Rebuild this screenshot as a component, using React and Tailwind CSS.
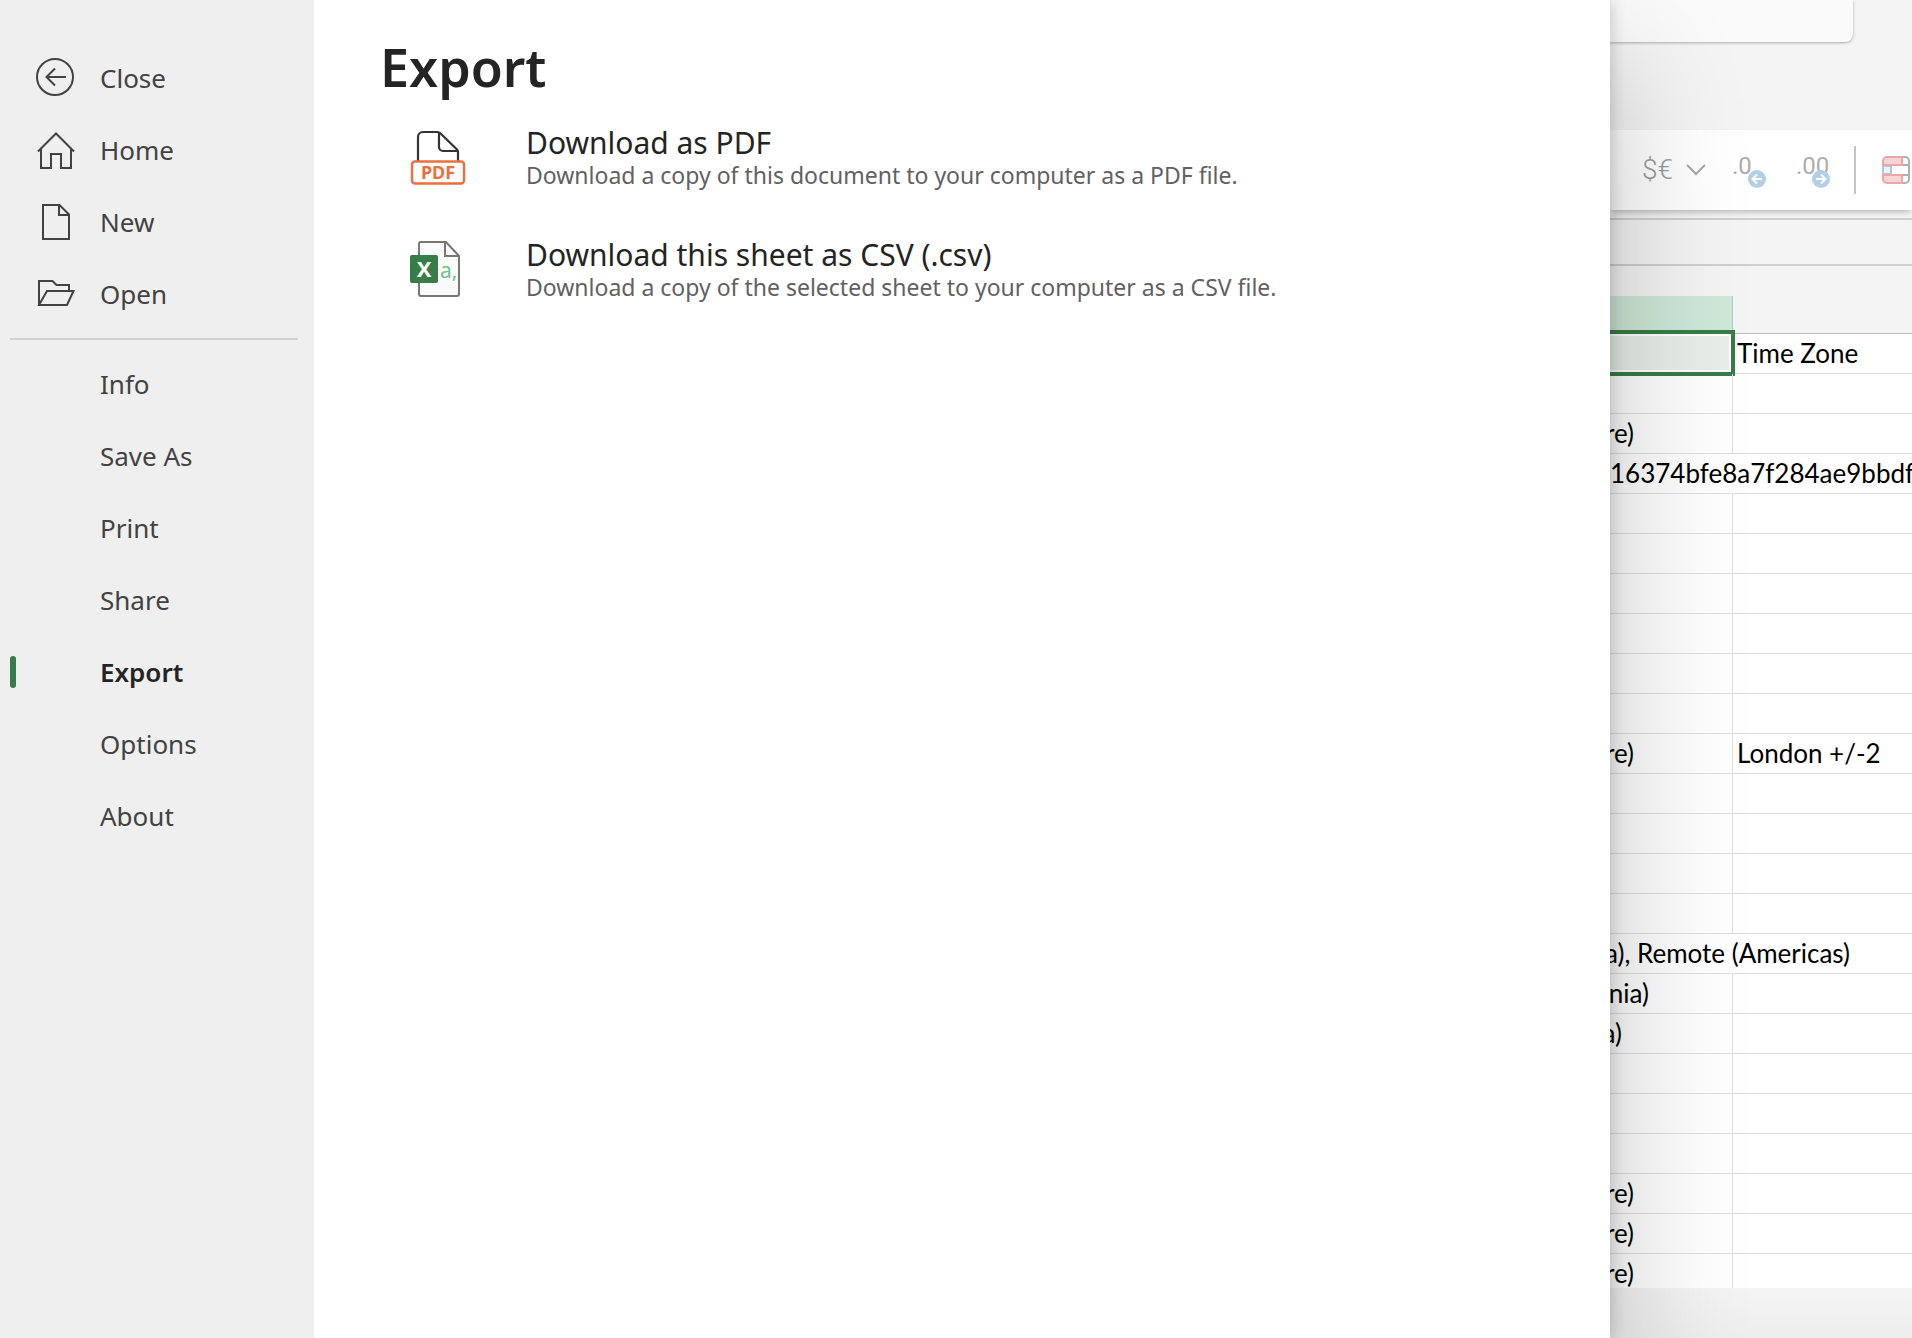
import React from "react";

const line = { fill: "none", stroke: "#424242", strokeWidth: 2 };

function CloseIcon() {
  return (
    <svg width="40" height="40" viewBox="0 0 40 40" {...line} aria-hidden="true">
      <circle cx="19" cy="19" r="18" />
      <path d="M30 19H11M19 10.500 10.500 19l8.500 8.500" />
    </svg>
  );
}

function HomeIcon() {
  return (
    <svg width="40" height="40" viewBox="0 0 40 40" {...line} aria-hidden="true">
      <path d="M2 21.500 20 3.500 38 21.500" />
      <path d="M5 18.500V38h10V24h10v14h10V18.500" />
    </svg>
  );
}

function NewIcon() {
  return (
    <svg width="40" height="40" viewBox="0 0 40 40" {...line} aria-hidden="true">
      <path d="M7 3h16.500L33 12.500V37H7Z" />
      <path d="M23 3v10h10" />
    </svg>
  );
}

function OpenIcon() {
  return (
    <svg width="40" height="40" viewBox="0 0 40 40" {...line} aria-hidden="true">
      <path d="M3 31V7h13.500l4 4H33v6" />
      <path d="M3 31 11 17h26.500L31 31Z" />
    </svg>
  );
}

function PdfIcon() {
  return (
    <svg width="64" height="64" viewBox="0 0 64 64" fill="none" aria-hidden="true">
      <path d="M12 37V13a5 5 0 0 1 5-5h14.500a4 4 0 0 1 2.800 1.200L51 25.500a4 4 0 0 1 1 2.500v9" stroke="#333" strokeWidth="2.200" />
      <path d="M33 8.500V23a4 4 0 0 0 4 4h14.500" stroke="#333" strokeWidth="2.200" />
      <rect x="6" y="37.500" width="52" height="22" rx="3" fill="#fff" stroke="#ec6f3e" strokeWidth="2.400" />
      <text x="32" y="55" textAnchor="middle" fontFamily="Noto Sans, sans-serif" fontSize="18" fontWeight="700" fill="#ec6f3e">PDF</text>
    </svg>
  );
}

function CsvIcon() {
  return (
    <svg width="64" height="64" viewBox="0 0 64 64" fill="none" aria-hidden="true">
      <path d="M14 6h26l13 14v38a2 2 0 0 1-2 2H15a2 2 0 0 1-2-2V8a2 2 0 0 1 1-2Z" fill="#fafafa" stroke="#797774" strokeWidth="2" />
      <path d="M39 6v14h14" stroke="#797774" strokeWidth="2" />
      <rect x="4" y="19" width="28" height="28" rx="2" fill="#377d47" />
      <text x="18" y="41" textAnchor="middle" fontFamily="Noto Sans, sans-serif" fontSize="22" fontWeight="700" fill="#fff">X</text>
      <text x="34" y="42" fontFamily="Noto Sans, sans-serif" fontSize="21" fill="#6cc48d">a,</text>
    </svg>
  );
}

function DecimalIcon({ digits, direction }) {
  return (
    <svg width="36" height="36" viewBox="0 0 36 36" fill="none" aria-hidden="true">
      <text x="0" y="22" fontFamily="Roboto, sans-serif" fontSize="24" fontWeight="400" fill="#adadad">{digits}</text>
      <circle cx="25" cy="27" r="9" fill="#b3cfe8" />
      <path
        d={direction === "left" ? "M30 27H20.500M25 22.500 20.500 27l4.500 4.500" : "M20 27h9.500M25 22.500l4.500 4.500-4.500 4.500"}
        stroke="#fff"
        strokeWidth="2"
      />
    </svg>
  );
}

function TableIcon() {
  return (
    <svg width="28" height="28" viewBox="0 0 28 28" fill="none" aria-hidden="true">
      <path d="M19 1h4a4 4 0 0 1 4 4v18a4 4 0 0 1-4 4h-4M20 9h7M20 19h7" stroke="#b0b0b0" strokeWidth="2" />
      <rect x="1" y="10" width="8" height="8" fill="#eef4fc" stroke="#b3c6e0" strokeWidth="2" />
      <path d="M20 1H5a4 4 0 0 0-4 4v4h19ZM20 27H5a4 4 0 0 1-4-4v-4h19Z" fill="#f8d3d5" stroke="#e8a9a6" strokeWidth="2" />
    </svg>
  );
}

const topItems = [
  ["Close", CloseIcon],
  ["Home", HomeIcon],
  ["New", NewIcon],
  ["Open", OpenIcon],
];

const bottomItems = ["Info", "Save As", "Print", "Share", "Export", "Options", "About"];

const exportOptions = [
  {
    title: "Download as PDF",
    text: "Download a copy of this document to your computer as a PDF file.",
    Icon: PdfIcon,
  },
  {
    title: "Download this sheet as CSV (.csv)",
    text: "Download a copy of the selected sheet to your computer as a CSV file.",
    Icon: CsvIcon,
  },
];

// Cell text that runs in from under the panel ends at the width of its slot.
const rows = Array.from({ length: 24 }, () => ({}));
rows[0] = { next: "Time Zone" };
rows[2] = { text: "re)", slot: "w-6" };
rows[3] = { text: "16374bfe8a7f284ae9bbdf", start: true, open: true };
rows[10] = { text: "re)", slot: "w-6", next: "London +/-2" };
rows[15] = { text: "a), Remote (Americas)", slot: "w-60", open: true };
rows[16] = { text: "nia)", slot: "w-[39px]" };
rows[17] = { text: "a)", slot: "w-3" };
rows[21] = { text: "re)", slot: "w-6" };
rows[22] = { text: "re)", slot: "w-6" };
rows[23] = { text: "re)", slot: "w-6" };

function Sidebar() {
  return (
    <nav className="w-[314px] shrink-0 bg-[#efefef] pt-[42px] text-[26px] text-[#424242]">
      {topItems.map(([label, Icon]) => (
        <button key={label} type="button" className="flex h-[72px] w-full items-center gap-6 pl-9 text-left">
          <Icon />
          <span>{label}</span>
        </button>
      ))}
      <hr className="mt-2 mr-4 mb-2 ml-[10px] border-t-2 border-[#d1d1d1]" />
      {bottomItems.map((label) => (
        <button key={label} type="button" className="flex h-[72px] w-full items-center pl-[10px] text-left">
          <span className={label === "Export" ? "h-8 w-[6px] rounded-full bg-[#377d47]" : "h-8 w-[6px]"} />
          <span className={label === "Export" ? "ml-[84px] font-semibold text-[#242424]" : "ml-[84px]"}>{label}</span>
        </button>
      ))}
    </nav>
  );
}

function ExportPanel() {
  return (
    <main className="min-w-0 flex-1 bg-white pt-[31px] pl-[66px]">
      <h1 className="text-[52px] leading-[72px] font-semibold text-[#242424]">Export</h1>
      <div className="mt-[21px] flex flex-col gap-12 pl-[26px]">
        {exportOptions.map(({ title, text, Icon }) => (
          <button key={title} type="button" className="flex gap-14 text-left">
            <Icon />
            <span className="flex flex-col">
              <span className="text-[30px] leading-[38px] text-[#242424]">{title}</span>
              <span className="text-[23px] leading-[26px] text-[#616161]">{text}</span>
            </span>
          </button>
        ))}
      </div>
    </main>
  );
}

function Ribbon() {
  return (
    <div className="flex h-20 shrink-0 items-center bg-white pl-8 shadow-[0_4px_6px_-2px_rgba(0,0,0,0.25)]">
      <button type="button" aria-label="Currency format" className="flex shrink-0 items-center text-left text-[#9c9c9c]">
        <span className="w-11 font-[Roboto,sans-serif] text-[28px] font-light">$€</span>
        <svg width="20" height="12" viewBox="0 0 20 12" fill="none" stroke="#a8a8a8" strokeWidth="2" aria-hidden="true">
          <path d="m1 1 9 9 9-9" />
        </svg>
      </button>
      <button type="button" aria-label="Increase decimal" className="ml-[26px] shrink-0">
        <DecimalIcon digits=".0" direction="left" />
      </button>
      <button type="button" aria-label="Decrease decimal" className="ml-7 shrink-0">
        <DecimalIcon digits=".00" direction="right" />
      </button>
      <span className="ml-[22px] h-12 w-[2px] shrink-0 bg-[#c4c4c4]" />
      <button type="button" aria-label="Conditional formatting" className="ml-[26px] shrink-0">
        <TableIcon />
      </button>
    </div>
  );
}

function Sheet() {
  return (
    <section className="flex w-[302px] shrink-0 flex-col overflow-hidden bg-[#f4f4f4]">
      <div className="mr-[59px] h-[42px] shrink-0 rounded-br-lg bg-[#fafafa] shadow-[0_1px_3px_rgba(0,0,0,0.3)]" />
      <div className="h-[88px] shrink-0" />
      <Ribbon />
      <div className="mt-2 h-12 shrink-0 border-y-2 border-[#cfcfcf] bg-[#f4f4f4]" />
      <div className="min-h-0 flex-1 overflow-hidden pt-[30px]">
        <table className="w-full table-fixed border-separate border-spacing-0 font-[Lato,sans-serif] text-[26px] text-black">
          <thead>
            <tr className="h-[38px]">
              <th aria-label="Selected column" className="w-[123px] border-r border-b border-[#a9d5b8] bg-[#cfe8d8]" />
              <th aria-label="Next column" className="border-b border-[#bdbdbd]" />
            </tr>
          </thead>
          <tbody className="bg-white">
            {rows.map((row, i) => (
              <tr key={i} className="h-10">
                <td
                  className={
                    row.open
                      ? "relative border-r border-b border-r-transparent border-b-[#dedede] p-0"
                      : "relative border-r border-b border-[#dedede] p-0"
                  }
                >
                  {i === 0 && (
                    <span className="absolute -top-1 -right-[3px] -bottom-[3px] -left-2 border-4 border-[#377d47] bg-white p-[2px]">
                      <span className="block h-full bg-[#e8efea]" />
                    </span>
                  )}
                  {row.start && <span className="block w-0 leading-[39px] whitespace-nowrap">{row.text}</span>}
                  {row.slot && (
                    <span className={`flex justify-end leading-[39px] whitespace-nowrap ${row.slot}`}>{row.text}</span>
                  )}
                </td>
                <td className="border-b border-[#dedede] p-0 pl-1 leading-[39px] whitespace-nowrap">{row.next}</td>
              </tr>
            ))}
          </tbody>
        </table>
      </div>
      <div className="h-[50px] shrink-0 bg-linear-to-b from-[#f4f4f4] to-[#eeeeee]" />
    </section>
  );
}

export default function App() {
  return (
    <div className="flex h-screen overflow-hidden font-['Noto_Sans',sans-serif]">
      <div className="relative z-10 flex min-w-0 flex-1 shadow-[0_0_16px_rgba(0,0,0,0.2),0_64px_128px_rgba(0,0,0,0.24)]">
        <Sidebar />
        <ExportPanel />
      </div>
      <Sheet />
    </div>
  );
}
